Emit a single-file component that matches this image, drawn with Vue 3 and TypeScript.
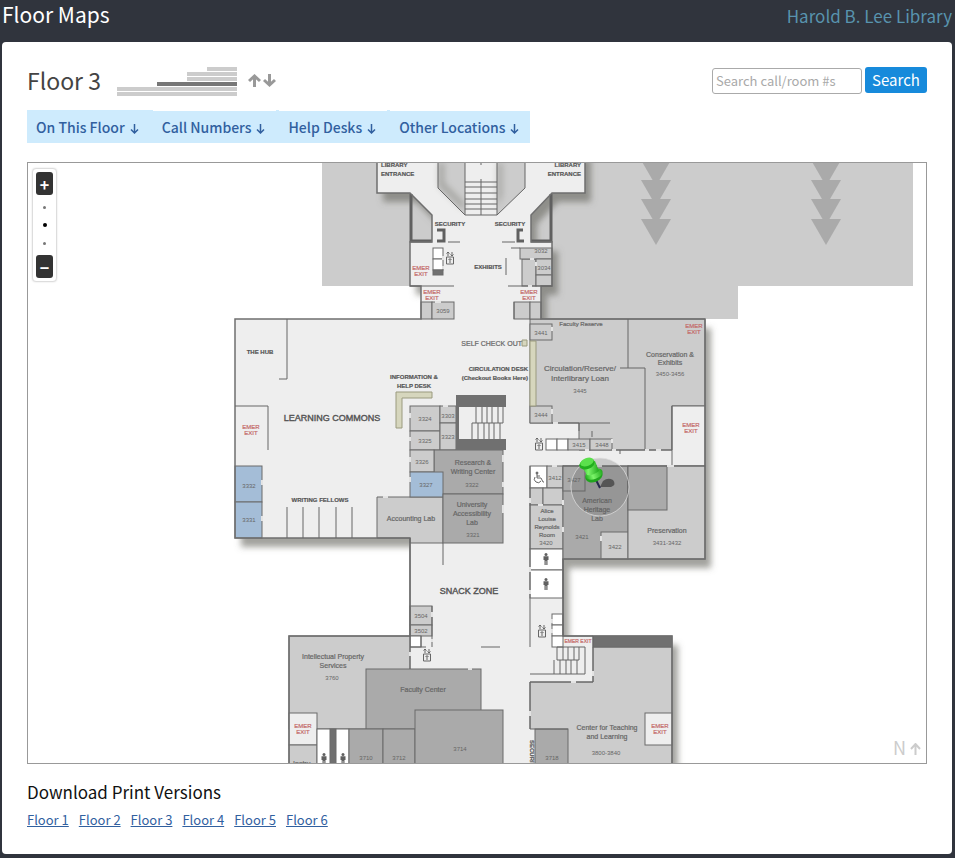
<script setup lang="ts">
import { ref } from 'vue'

type Tone = 'open' | 'light' | 'dark' | 'blue' | 'white' | 'solid'

interface Room {
  x: number
  y: number
  w: number
  h: number
  tone: Tone
}

interface Label {
  x: number
  y: number
  lines: string[]
  kind: string
  step?: number
}

const room = (x1: number, y1: number, x2: number, y2: number, tone: Tone): Room => ({
  x: x1,
  y: y1,
  w: x2 - x1,
  h: y2 - y1,
  tone,
})

const query = ref('')
const zoomLevel = ref(2)
const currentFloor = ref(3)

const floorBars = [
  { floor: 6, width: 30 },
  { floor: 5, width: 50 },
  { floor: 4, width: 50 },
  { floor: 3, width: 80 },
  { floor: 2, width: 120 },
  { floor: 1, width: 120 },
]

const menus = ['On This Floor', 'Call Numbers', 'Help Desks', 'Other Locations']
const printFloors = [1, 2, 3, 4, 5, 6]
const zoomSteps = [3, 2, 1]

const treeColumns = [656, 826]
const treeTops = [160, 180, 199, 219]

const rooms: Room[] = [
  // entrance wing
  room(433, 248, 443, 259, 'white'),
  room(433, 259, 443, 270, 'white'),
  room(433, 270, 443, 275, 'solid'),
  room(522, 259, 536, 286, 'light'),
  room(520, 248, 552, 259, 'light'),
  room(536, 259, 552, 275, 'light'),
  room(536, 275, 552, 286, 'light'),
  room(421, 302, 432, 319, 'light'),
  room(432, 302, 454, 319, 'light'),
  room(514, 302, 530, 319, 'light'),
  room(530, 302, 541, 319, 'light'),
  // learning commons
  room(235, 466, 262, 502, 'blue'),
  room(235, 502, 262, 538, 'blue'),
  room(410, 406, 440, 431, 'light'),
  room(410, 431, 440, 450, 'light'),
  room(440, 406, 456, 423, 'light'),
  room(440, 423, 456, 450, 'light'),
  room(434, 450, 503, 494, 'dark'),
  room(410, 450, 434, 472, 'light'),
  room(410, 472, 443, 497, 'blue'),
  room(443, 494, 503, 543, 'dark'),
  // circulation
  room(530, 324, 552, 340, 'light'),
  room(530, 406, 552, 423, 'light'),
  room(546, 439, 557, 450, 'white'),
  room(557, 439, 568, 450, 'white'),
  room(568, 439, 590, 450, 'light'),
  room(590, 439, 612, 450, 'light'),
  room(672, 406, 705, 466, 'open'),
  // east rooms
  room(530, 466, 547, 488, 'white'),
  room(547, 466, 563, 488, 'light'),
  room(530, 488, 543, 505, 'light'),
  room(543, 488, 563, 505, 'light'),
  room(530, 505, 563, 549, 'light'),
  room(530, 549, 563, 570, 'white'),
  room(530, 570, 563, 598, 'white'),
  room(563, 466, 628, 559, 'dark'),
  room(563, 466, 585, 491, 'dark'),
  room(601, 532, 628, 559, 'light'),
  room(628, 466, 705, 559, 'light'),
  room(628, 466, 667, 510, 'dark'),
  // south-west rooms
  room(410, 606, 432, 625, 'light'),
  room(410, 625, 432, 636, 'light'),
  room(410, 636, 421, 647, 'white'),
  room(289, 636, 410, 729, 'light'),
  room(366, 669, 481, 729, 'dark'),
  room(289, 713, 317, 745, 'open'),
  room(289, 745, 317, 770, 'light'),
  room(317, 729, 349, 770, 'white'),
  room(330, 729, 336, 770, 'solid'),
  room(349, 729, 383, 770, 'dark'),
  room(383, 729, 415, 770, 'dark'),
  room(415, 710, 503, 770, 'dark'),
  // south-east rooms
  room(552, 614, 563, 625, 'white'),
  room(552, 625, 563, 636, 'white'),
  room(552, 636, 563, 647, 'white'),
  room(593, 636, 672, 647, 'solid'),
  room(535, 729, 568, 770, 'dark'),
  room(645, 713, 672, 745, 'open'),
]

const walls = [
  // entrance stairs
  'M465 182H497M465 187H497M465 193H497M465 199H497M465 204H497M465 209H497M481 179V215M481 163V165',
  // entrance hall
  'M438 163V188L465 215H497L525 188V163M465 163V215M497 163V215',
  'M448 242H460M502 242H515M506 258V275M410 286H454M508 286H552M514 302V319M511 248H520',
  // learning commons
  'M287 319V379H279M235 406H268V450',
  'M287 507V538M303 507V538M319 507V538M336 507V538M352 507V538',
  'M443 543V565M481 647H500',
  // central stairs
  'M476 407V423M482 407V423M487 407V423M492 407V423M498 407V423M503 407V423',
  'M472 423V439M478 423V439M484 423V439M489 423V439M494 423V439M500 423V439M472 423H503',
  // circulation
  'M628 319V368M620 368H645V450M552 423H610M579 423V431M592 431V437M612 450H672V406M620 450V454M563 466H705',
  'M530 466V636M530 636V647M563 559V636',
  // south-west
  'M410 538V669M432 606V647M410 647H426M421 636V647',
  // south-east stairs
  'M557 647V660M563 647V660M568 647V660M574 647V660M579 647V660M557 660H579M557 647H585V674H530',
  'M554 660V674M560 660V674M566 660V674M571 660V674M577 660V674M563 636H593V682H530V729H568',
]

const doorways = [
  'M383 497H388M410 413V418M410 437V441M410 457V462M410 477V482M443 406H448M262 480V485M262 516V521',
  'M503 455V462M503 482V487M503 505V513M552 409V414M552 327V331M553 423H558M612 439V443',
  'M530 498V503M530 567V572M530 590V594M552 466H557M597 466H602M667 466H674M563 500V505M538 505H543M563 527V532M601 536V541',
  'M585 450H589M612 450H616M645 450H649M656 450H661M410 652V656M468 669H472M530 711V716M571 682H576M593 671V676',
  'M443 256V260M443 266V269M435 302H441M528 286H532M536 262V266M530 259H534M432 612V617M552 619V623M552 629V633M432 639V642',
]

const labels: Label[] = [
  { x: 381, y: 167, lines: ['LIBRARY', 'ENTRANCE'], kind: 'caption start', step: 9 },
  { x: 581, y: 167, lines: ['LIBRARY', 'ENTRANCE'], kind: 'caption end', step: 9 },
  { x: 450, y: 226, lines: ['SECURITY'], kind: 'caption' },
  { x: 510, y: 226, lines: ['SECURITY'], kind: 'caption' },
  { x: 488, y: 269, lines: ['EXHIBITS'], kind: 'caption' },
  { x: 260, y: 354, lines: ['THE HUB'], kind: 'caption' },
  { x: 414, y: 379, lines: ['INFORMATION &', 'HELP DESK'], kind: 'caption', step: 9 },
  { x: 522, y: 346, lines: ['SELF CHECK OUT'], kind: 'end' },
  { x: 528, y: 371, lines: ['CIRCULATION DESK', '(Checkout Books Here)'], kind: 'caption end', step: 9 },
  { x: 320, y: 502, lines: ['WRITING FELLOWS'], kind: 'caption' },
  { x: 332, y: 421, lines: ['LEARNING COMMONS'], kind: 'zone' },
  { x: 469, y: 594, lines: ['SNACK ZONE'], kind: 'zone' },
  { x: 580, y: 371, lines: ['Circulation/Reserve/', 'Interlibrary Loan'], kind: 'large', step: 10 },
  { x: 581, y: 326, lines: ['Faculty Reserve'], kind: 'minor' },
  { x: 670, y: 357, lines: ['Conservation &', 'Exhibits'], kind: 'name', step: 8 },
  { x: 473, y: 465, lines: ['Research &', 'Writing Center'], kind: 'name', step: 9 },
  { x: 472, y: 507, lines: ['University', 'Accessibility', 'Lab'], kind: 'name', step: 9 },
  { x: 411, y: 521, lines: ['Accounting Lab'], kind: 'name' },
  { x: 597, y: 503, lines: ['American', 'Heritage', 'Lab'], kind: 'name', step: 9 },
  { x: 547, y: 513, lines: ['Alice', 'Louise', 'Reynolds', 'Room'], kind: 'minor', step: 8 },
  { x: 667, y: 533, lines: ['Preservation'], kind: 'name' },
  { x: 333, y: 659, lines: ['Intellectual Property', 'Services'], kind: 'name', step: 9 },
  { x: 423, y: 692, lines: ['Faculty Center'], kind: 'name' },
  { x: 607, y: 730, lines: ['Center for Teaching', 'and Learning'], kind: 'name', step: 9 },
  { x: 303, y: 766, lines: ['Instru-'], kind: 'name' },
]

const numbers: [number, number, string][] = [
  [541, 253, '3032'], [544, 270, '3034'], [443, 313, '3059'], [541, 335, '3441'],
  [580, 393, '3445'], [670, 376, '3450-3456'], [541, 417, '3444'], [579, 447, '3415'],
  [602, 447, '3448'], [425, 421, '3324'], [448, 418, '3303'], [425, 443, '3325'],
  [448, 439, '3323'], [422, 464, '3326'], [426, 487, '3327'], [249, 488, '3332'],
  [249, 522, '3331'], [472, 487, '3322'], [473, 537, '3321'], [555, 480, '3412'],
  [574, 482, '3427'], [546, 545, '3420'], [582, 539, '3421'], [615, 549, '3422'],
  [667, 545, '3431-3432'], [421, 618, '3504'], [421, 633, '3502'], [332, 680, '3760'],
  [366, 760, '3710'], [399, 760, '3712'], [460, 751, '3714'], [606, 755, '3800-3840'],
  [552, 760, '3718'],
]

const exits: [number, number][] = [
  [421, 270], [432, 294], [529, 294], [251, 429], [694, 328], [691, 427], [303, 728], [660, 728],
]

const elevators: [number, number][] = [[450, 258], [539, 444], [542, 631], [427, 655]]
const people: [number, number][] = [[546, 559], [546, 584], [324, 759], [343, 759]]
</script>

<template>
  <div class="page">
    <header class="masthead">
      <h1>Floor Maps</h1>
      <a class="library" href="#library">Harold B. Lee Library</a>
    </header>

    <main class="panel">
      <div class="toolbar">
        <h2>Floor {{ currentFloor }}</h2>
        <div class="stack">
          <button
            v-for="bar in floorBars"
            :key="bar.floor"
            type="button"
            class="bar"
            :class="{ current: bar.floor === currentFloor }"
            :style="{ width: bar.width + 'px' }"
            :aria-label="'Floor ' + bar.floor"
            @click="currentFloor = bar.floor"
          ></button>
        </div>
        <div class="steps">
          <button type="button" aria-label="Up one floor" @click="currentFloor = Math.min(6, currentFloor + 1)">
            <svg width="13" height="14" viewBox="0 0 13 14"><path d="M6.500 13V2M1 7L6.500 2L12 7" /></svg>
          </button>
          <button type="button" aria-label="Down one floor" @click="currentFloor = Math.max(1, currentFloor - 1)">
            <svg width="13" height="14" viewBox="0 0 13 14"><path d="M6.500 0V11M1 6L6.500 11L12 6" /></svg>
          </button>
        </div>
        <form class="search" @submit.prevent>
          <input v-model="query" type="text" placeholder="Search call/room #s" aria-label="Search call/room #s" />
          <button type="submit">Search</button>
        </form>
      </div>

      <nav class="menus">
        <a v-for="menu in menus" :key="menu" href="#map">
          {{ menu }}
          <svg width="9" height="10" viewBox="0 0 9 10"><path d="M4.500 0V9M1 5.500L4.500 9L8 5.500" /></svg>
        </a>
      </nav>

      <section id="map" class="map" aria-label="Floor map">
        <svg class="plan" viewBox="28 163 898 600" preserveAspectRatio="xMidYMid slice">
          <defs>
            <filter id="cast" x="-10%" y="-10%" width="120%" height="120%">
              <feDropShadow dx="6" dy="9" stdDeviation="3" flood-color="#66665e" flood-opacity="0.6" />
            </filter>
            <filter id="soft" x="-30%" y="-30%" width="160%" height="160%">
              <feGaussianBlur stdDeviation="3" />
            </filter>
            <linearGradient id="pinGreen" x1="0" x2="1">
              <stop offset="0" stop-color="#21b21d" />
              <stop offset="0.4" stop-color="#7cf56a" />
              <stop offset="1" stop-color="#20a71c" />
            </linearGradient>
          </defs>

          <path class="terrace" d="M322 150H913V286H738V319H541V286H322Z" />
          <template v-for="cx in treeColumns" :key="cx">
            <path
              v-for="top in treeTops"
              :key="top"
              class="tree"
              :d="`M${cx - 15} ${top}H${cx + 15}L${cx} ${top + 26}Z`"
            />
          </template>

          <path
            class="building"
            filter="url(#cast)"
            d="M377 150V193H410L432 215V242H410V286H421V319H235V538H410V636H289V780H672V636H563V559H705V319H541V286H552V242H531V215L552 193H585V150Z"
          />
          <path class="light" d="M438 150V188L465 215V150ZM525 150V188L497 215V150Z" />
          <path class="inner-shade" filter="url(#soft)" d="M439 163H444V183L464 203V210L439 186ZM498 163H502V195L498 208Z" />
          <path class="heavy" d="M411 194V241H432M551 194V241H531" />
          <path class="heavy" d="M437 230H444V241H437M523 230H518V241H524" />

          <path class="light edge" d="M530 319H705V406H672V450H579V423H530Z" />
          <path class="light edge" d="M377 497H443V543H410V538H377Z" />
          <path class="light edge" d="M593 647H672V780H530V682H593Z" />
          <path class="open" d="M529 729H535V780H529Z" />

          <rect
            v-for="(r, i) in rooms"
            :key="i"
            :class="[r.tone, 'edge']"
            :x="r.x"
            :y="r.y"
            :width="r.w"
            :height="r.h"
          />
          <path class="solid" d="M456 395H506V407H459V439H506V450H456Z" />

          <path
            class="outline"
            d="M377 150V193H410L432 215V242H410V286H421V319H235V538H410V636H289V780M672 780V636H563V559H705V319H541V286H552V242H531V215L552 193H585V150"
          />
          <path v-for="(w, i) in walls" :key="'w' + i" class="wall" :d="w" />
          <path v-for="(d, i) in doorways" :key="'d' + i" class="door" :d="d" />

          <path class="desk" d="M396 392H432V398H402V428H396ZM530 341H536V406H530ZM522 340H527V346H522Z" />

          <g v-for="([x, y], i) in elevators" :key="'e' + i" class="icon-line" :transform="`translate(${x} ${y})`">
            <path d="M-3.500 -1H3.500V6H-3.500ZM0 5V1M-1.500 2L0 0.500L1.500 2M-2 -2V-6M-3.500 -4.500L-2 -6L-0.500 -4.500M2 -6V-2M0.500 -3.500L2 -2L3.500 -3.500" />
          </g>
          <g v-for="([x, y], i) in people" :key="'p' + i" class="person" :transform="`translate(${x} ${y})`">
            <circle cx="0" cy="-4.500" r="1.500" />
            <path d="M-2.500 -2.800H2.500V1H1.500V6H0.300V2H-0.300V6H-1.500V1H-2.500Z" />
          </g>
          <g class="icon-line">
            <circle class="fill-dark" cx="537" cy="473" r="1" />
            <path d="M537 474V478H541L543 482H544M535 477A3.500 3.500 0 1 0 541 481M537 476H540" />
          </g>

          <text v-for="(l, i) in labels" :key="'l' + i" :class="l.kind">
            <tspan v-for="(line, n) in l.lines" :key="n" :x="l.x" :y="l.y + n * (l.step ?? 0)">{{ line }}</tspan>
          </text>
          <text v-for="([x, y, n], i) in numbers" :key="'n' + i" class="number" :x="x" :y="y">{{ n }}</text>
          <text v-for="([x, y], i) in exits" :key="'x' + i" class="exit">
            <tspan :x="x" :y="y">EMER</tspan>
            <tspan :x="x" :y="y + 6">EXIT</tspan>
          </text>
          <text class="exit small" x="578" y="643">EMER EXIT</text>
          <text class="caption start" transform="translate(530 740) rotate(90)">SECURITY</text>

          <circle class="halo" cx="600" cy="487" r="29" />
          <path class="pin-shadow" d="M600 487L603 481Q608 477 613 480Q617 485 611 487Q605 487 600 487Z" />
          <path d="M596 480L600 488" stroke="#26264d" stroke-width="2" />
          <ellipse cx="594" cy="476" rx="9" ry="6" fill="#21a51e" transform="rotate(-20 594 476)" />
          <ellipse cx="594" cy="474" rx="9" ry="5" fill="url(#pinGreen)" transform="rotate(-20 594 474)" />
          <path d="M581 465L587 475Q593 476 599 471L595 461Z" fill="url(#pinGreen)" />
          <ellipse cx="587" cy="464" rx="8" ry="5" fill="#22ae1e" transform="rotate(-20 587 464)" />
          <ellipse cx="587" cy="462" rx="7" ry="4" fill="#5be04c" transform="rotate(-20 587 462)" />
        </svg>

        <div class="zoom">
          <button type="button" class="zoom-end" aria-label="Zoom in" @click="zoomLevel = Math.min(3, zoomLevel + 1)">+</button>
          <button
            v-for="step in zoomSteps"
            :key="step"
            type="button"
            class="zoom-dot"
            :class="{ active: step === zoomLevel }"
            :aria-label="'Zoom level ' + step"
            @click="zoomLevel = step"
          ></button>
          <button type="button" class="zoom-end" aria-label="Zoom out" @click="zoomLevel = Math.max(1, zoomLevel - 1)">−</button>
        </div>

        <div class="north">
          N
          <svg width="11" height="12" viewBox="0 0 11 12"><path d="M5.500 12V1M1 6L5.500 1L10 6" /></svg>
        </div>
      </section>

      <section class="downloads">
        <h3>Download Print Versions</h3>
        <div class="links">
          <a v-for="n in printFloors" :key="n" :href="'#print-floor-' + n">Floor {{ n }}</a>
        </div>
      </section>
    </main>
  </div>
</template>

<style>
body {
  background: #30343d;
}
</style>

<style scoped>
.page {
  box-sizing: border-box;
  min-height: 100vh;
  padding: 0 3px 4px 2px;
  display: flex;
  flex-direction: column;
  background: #30343d;
  font-family: "Noto Sans CJK SC", "Noto Sans", sans-serif;
}

h1,
h2,
h3 {
  margin: 0;
  font-weight: 400;
}

button {
  margin: 0;
  padding: 0;
  border: 0;
  font-family: inherit;
  cursor: pointer;
}

.masthead {
  display: flex;
  justify-content: space-between;
  height: 42px;
}

.masthead h1 {
  font-size: 21px;
  line-height: 28px;
  color: #fff;
}

.library {
  font-size: 17px;
  line-height: 32px;
  color: #5893ae;
  text-decoration: none;
}

.panel {
  flex: 1;
  padding: 25px 25px 20px;
  border-radius: 4px;
  background: #fff;
}

.toolbar {
  display: flex;
  align-items: flex-start;
  height: 29px;
}

.toolbar h2 {
  width: 90px;
  font-size: 23px;
  line-height: 27px;
  color: #444;
}

.stack {
  display: flex;
  flex-direction: column;
  align-items: flex-end;
  gap: 1px;
  width: 120px;
}

.bar {
  height: 4px;
  background: #ccc;
}

.bar.current {
  background: #777;
}

.steps {
  display: flex;
  gap: 2px;
  margin: 7px 0 0 11px;
}

.steps button {
  display: flex;
  background: none;
}

.steps path {
  fill: none;
  stroke: #999;
  stroke-width: 3;
}

.search {
  display: flex;
  gap: 3px;
  margin-left: auto;
}

.search input {
  box-sizing: border-box;
  width: 150px;
  height: 26px;
  margin: 1px 0 0;
  padding: 0 3px 2px;
  border: 1px solid #aaa;
  border-radius: 3px;
  font-family: inherit;
  font-size: 13px;
  color: #444;
}

.search input::placeholder {
  color: #a9a9a9;
}

.search button {
  width: 62px;
  height: 26px;
  border-radius: 3px;
  background: #178adb;
  font-size: 15px;
  line-height: 26px;
  color: #fff;
}

.menus {
  display: flex;
  gap: 3px;
  width: max-content;
  margin-top: 14px;
  background: #ceebfd;
}

.menus a {
  display: flex;
  align-items: center;
  gap: 5px;
  padding: 0 11px 0 9px;
  border-top: 1px solid #fff;
  font-size: 14px;
  font-weight: 500;
  line-height: 32px;
  color: #31609f;
  text-decoration: none;
}

.menus a:first-child {
  border-top-color: #ceebfd;
}

.menus svg {
  margin-top: 4px;
}

.menus path {
  fill: none;
  stroke: #31609f;
  stroke-width: 1.500;
}

.map {
  position: relative;
  margin-top: 19px;
  border: 1px solid #999;
  overflow: hidden;
}

.plan {
  display: block;
  width: 100%;
  height: 600px;
}

.terrace,
.light {
  fill: #ccc;
}

.tree {
  fill: #aaa;
}

.building,
.open {
  fill: #eee;
}

.dark {
  fill: #aaa;
}

.blue {
  fill: #a4bdd7;
}

.white {
  fill: #fff;
}

.solid {
  fill: #707070;
}

.edge {
  stroke: #6a6a6a;
  stroke-width: 1;
}

.outline {
  fill: none;
  stroke: #6f6f6f;
  stroke-width: 1.500;
}

.wall {
  fill: none;
  stroke: #666;
  stroke-width: 1;
}

.heavy {
  fill: none;
  stroke: #606060;
  stroke-width: 3;
}

.inner-shade {
  fill: #77776f;
  opacity: 0.5;
}

.door {
  fill: none;
  stroke: #e4e4e4;
  stroke-width: 2;
}

.desk {
  fill: #d6d6bd;
  stroke: #9a9a7e;
}

.icon-line {
  fill: none;
  stroke: #666;
}

.person,
.fill-dark {
  fill: #606060;
}

.plan text {
  font-family: "Liberation Sans", Arial, sans-serif;
  font-size: 7px;
  text-anchor: middle;
  fill: #666;
  stroke: #666;
  stroke-width: 0.200;
}

.plan .caption {
  font-size: 6px;
  font-weight: 700;
  fill: #505050;
}

.plan .zone {
  font-size: 9px;
  fill: #555;
  stroke: #555;
  stroke-width: 0.400;
}

.plan .large {
  font-size: 8px;
}

.plan .minor {
  font-size: 6px;
}

.plan .number {
  font-size: 6px;
  stroke: none;
}

.plan .exit {
  font-size: 6px;
  fill: #c46a69;
  stroke: #c46a69;
}

.plan .exit.small {
  font-size: 5px;
}

.plan .start {
  text-anchor: start;
}

.plan .end {
  text-anchor: end;
}

.halo {
  fill: rgba(90, 90, 90, 0.25);
  stroke: rgba(225, 225, 225, 0.7);
}

.pin-shadow {
  fill: #555;
}

.zoom {
  position: absolute;
  top: 5px;
  left: 4px;
  display: flex;
  flex-direction: column;
  align-items: center;
  padding: 3px;
  border: 1px solid #ddd;
  border-radius: 4px;
  background: #fff;
  box-shadow: 0 0 2px #ddd;
}

.zoom-end {
  width: 17px;
  height: 23px;
  border-radius: 3px;
  background: #333;
  font-size: 16px;
  font-weight: 700;
  line-height: 18px;
  color: #fff;
}

.zoom-dot {
  display: flex;
  align-items: center;
  justify-content: center;
  width: 17px;
  height: 18px;
  background: none;
}

.zoom-dot:nth-child(2) {
  margin-top: 3px;
}

.zoom-dot:nth-child(4) {
  margin-bottom: 3px;
}

.zoom-dot::before {
  content: "";
  width: 3px;
  height: 3px;
  border-radius: 50%;
  background: #777;
}

.zoom-dot.active::before {
  width: 4px;
  height: 4px;
  background: #000;
}

.north {
  position: absolute;
  right: 5px;
  bottom: 3px;
  display: flex;
  align-items: center;
  gap: 4px;
  font-size: 18px;
  line-height: 26px;
  color: #ccc;
}

.north svg {
  margin-top: 3px;
}

.north path {
  fill: none;
  stroke: #ccc;
  stroke-width: 2;
}

.downloads h3 {
  margin-top: 15px;
  font-size: 17px;
  line-height: 26px;
  color: #111;
}

.links {
  display: flex;
  gap: 10px;
  margin-top: 5px;
}

.links a {
  font-size: 13px;
  line-height: 20px;
  color: #31609f;
}
</style>
